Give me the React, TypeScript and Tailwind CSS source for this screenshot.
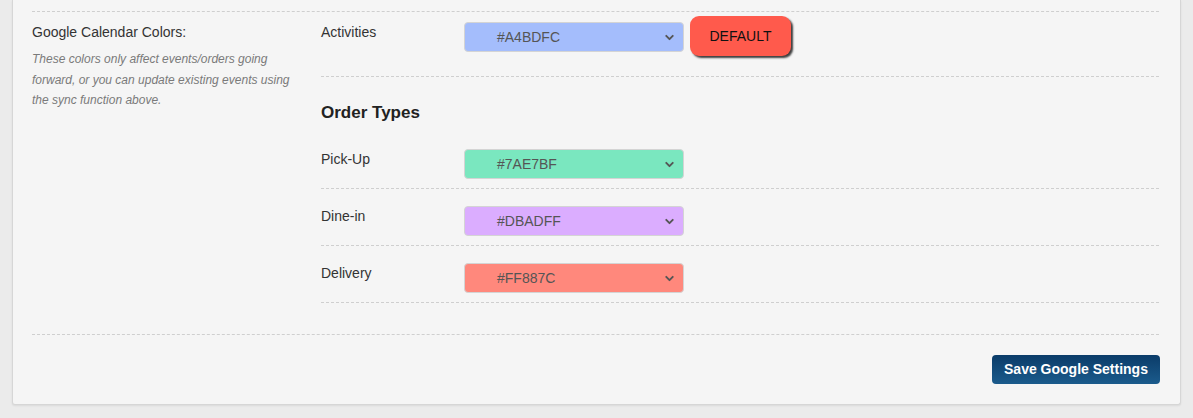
import { ChevronDown } from "lucide-react";

type ColorRow = { label: string; value: string; bg: string };

const orderTypes: ColorRow[] = [
  { label: "Pick-Up", value: "#7AE7BF", bg: "bg-[#7ae7bf]" },
  { label: "Dine-in", value: "#DBADFF", bg: "bg-[#dbadff]" },
  { label: "Delivery", value: "#FF887C", bg: "bg-[#ff887c]" },
];

function ColorSelect({ value, bg }: { value: string; bg: string }) {
  return (
    <div
      className={`flex h-[30px] w-[220px] shrink-0 items-center justify-between rounded-[4px] border border-[#d4d4d4] pl-[32px] pr-[7px] text-[14px] text-[#555] ${bg}`}
    >
      <span>{value}</span>
      <ChevronDown size={13} strokeWidth={3.5} className="text-[#555]" />
    </div>
  );
}

export default function App() {
  return (
    <div className="min-h-screen bg-[#ebebeb] font-['Liberation_Sans',Arial,sans-serif] text-[#333]">
      <div className="ml-[12px] w-[1169px] rounded-b-[3px] border-x border-b border-[#d6d6d6] bg-[#f5f5f5] pl-[19px] pr-[20px] pt-[11px] pb-[20px] shadow-[0_1px_2px_rgba(0,0,0,0.08)]">
        {/* Calendar colors */}
        <div className="mr-[1px] flex border-y border-dashed border-[#cfcfcf] pt-[10px] pb-[31px]">
          <div className="w-[289px] shrink-0">
            <p className="text-[14px] leading-[20px] text-[#333]">Google Calendar Colors:</p>
            <p className="mt-[7px] w-[260px] text-[12px] leading-[20.5px] italic text-[#7a7a7a]">
              These colors only affect events/orders going forward, or you can update existing
              events using the sync function above.
            </p>
          </div>

          <div className="flex-1">
            <div className="flex items-start border-b border-dashed border-[#cfcfcf] pb-[20px]">
              <span className="w-[143px] shrink-0 text-[14px] leading-[20px]">Activities</span>
              <ColorSelect value="#A4BDFC" bg="bg-[#a4bdfc]" />
              <button className="-mt-[6px] ml-[6px] h-[40px] w-[101px] rounded-[9px] bg-[#ff5a4c] text-[14px] text-[#111] shadow-[2px_2px_2px_rgba(0,0,0,0.75)]">
                DEFAULT
              </button>
            </div>

            <h3 className="mt-[25px] text-[17px] leading-[22px] font-bold text-[#222]">Order Types</h3>

            <div className="mt-[25px]">
              {orderTypes.map((row, i) => (
                <div
                  key={row.label}
                  className={`flex items-start border-b border-dashed border-[#cfcfcf] pb-[9px] ${i > 0 ? "pt-[17px]" : ""}`}
                >
                  <span className="w-[143px] shrink-0 text-[14px] leading-[20px]">{row.label}</span>
                  <ColorSelect value={row.value} bg={row.bg} />
                </div>
              ))}
            </div>
          </div>
        </div>

        <div className="mt-[20px] flex justify-end">
          <button className="h-[29px] w-[168px] rounded-[4px] bg-[linear-gradient(#0b3c69,#1b5b8c)] text-[14px] font-bold text-white">
            Save Google Settings
          </button>
        </div>
      </div>
    </div>
  );
}
